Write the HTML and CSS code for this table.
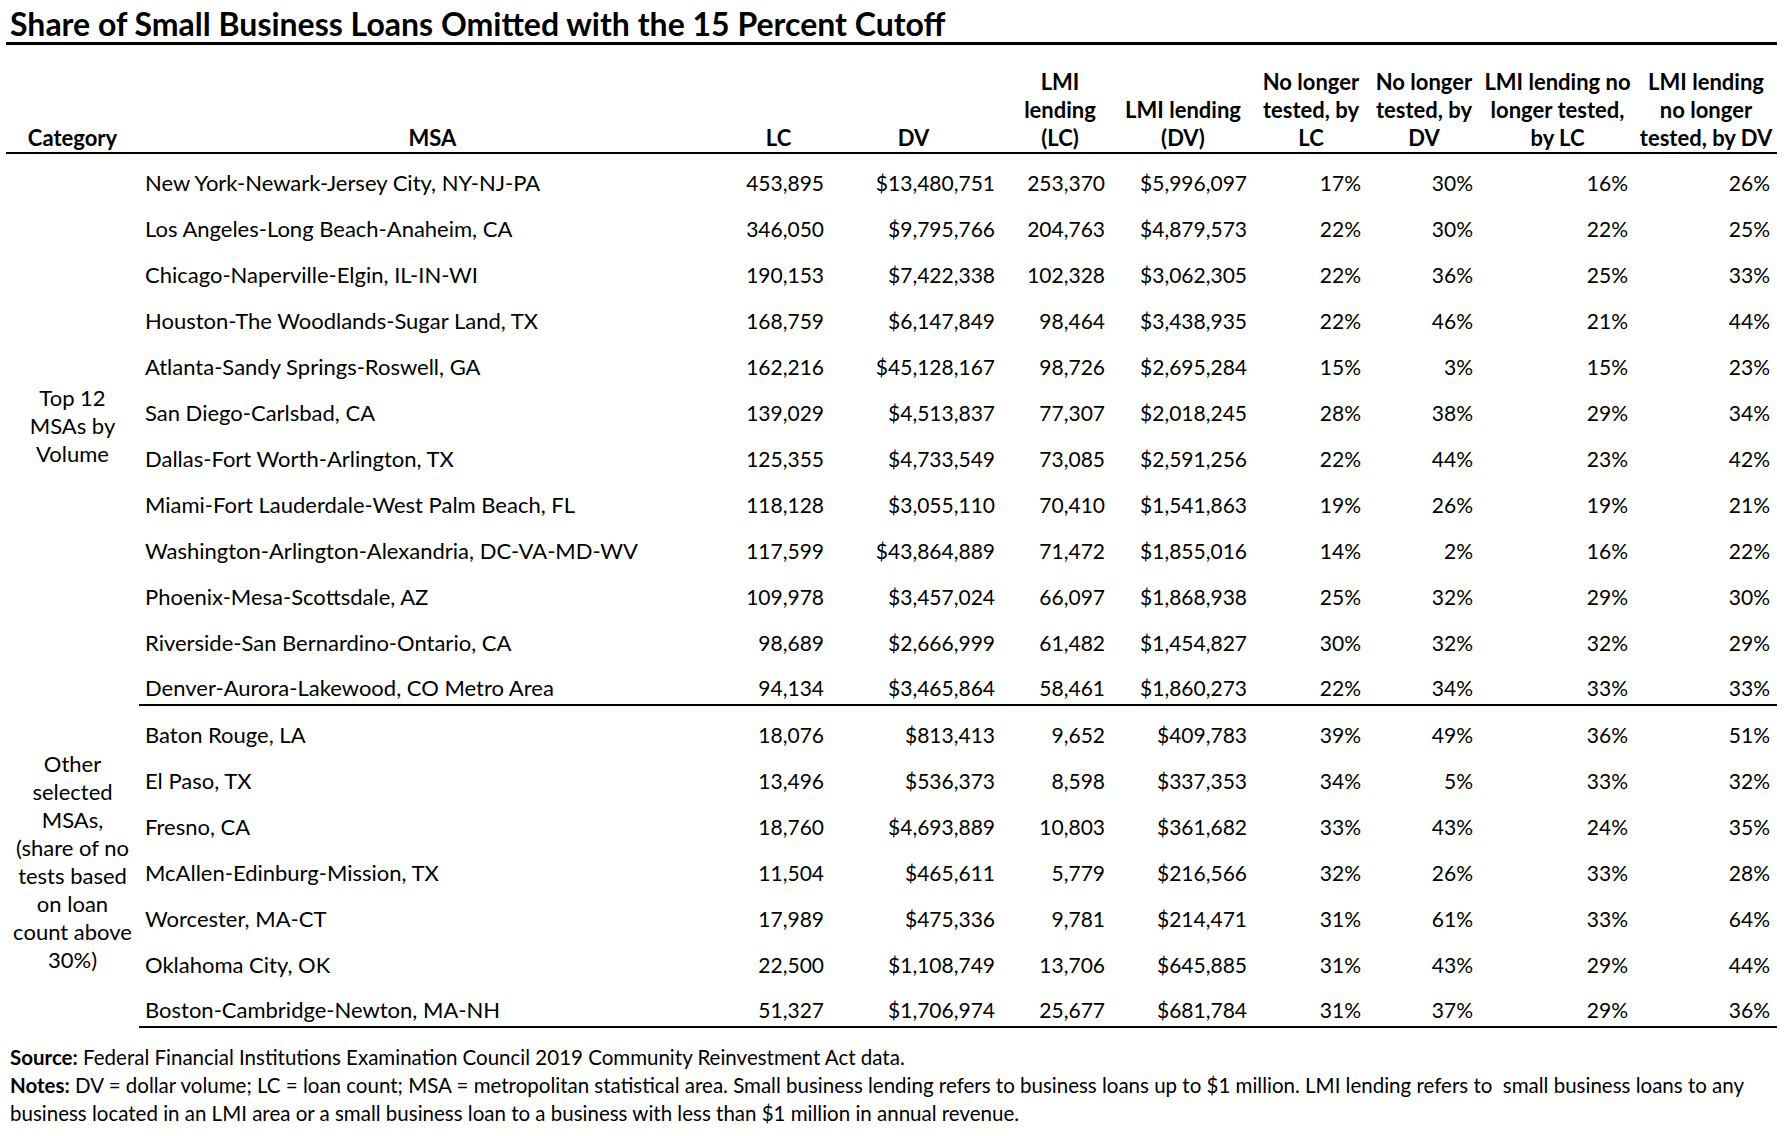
FILE: index.html
```html
<!DOCTYPE html>
<html>
<head>
  <link rel="stylesheet" href="styles.css">
</head>
<body>
  <div class="page">
    <h1 class="title">Share of Small Business Loans Omitted with the 15 Percent Cutoff</h1>

    <table class="loans">
      <colgroup>
        <col class="w-cat">
        <col class="w-msa">
        <col class="w-lc">
        <col class="w-dv">
        <col class="w-lmilc">
        <col class="w-lmidv">
        <col class="w-nllc">
        <col class="w-nldv">
        <col class="w-lmnlc">
        <col class="w-lmndv">
      </colgroup>
      <thead>
        <tr>
          <th>Category</th>
          <th>MSA</th>
          <th>LC</th>
          <th class="h-dv">DV</th>
          <th class="h-lmilc">LMI<br>lending<br>(LC)</th>
          <th>LMI lending<br>(DV)</th>
          <th>No longer<br>tested, by<br>LC</th>
          <th>No longer<br>tested, by<br>DV</th>
          <th>LMI lending no<br>longer tested,<br>by LC</th>
          <th>LMI lending<br>no longer<br>tested, by DV</th>
        </tr>
      </thead>
      <tbody>
        <tr>
          <td class="cat" rowspan="12">Top 12<br>MSAs by<br>Volume</td>
          <td class="msa">New York-Newark-Jersey City, NY-NJ-PA</td>
          <td>453,895</td><td>$13,480,751</td><td>253,370</td><td>$5,996,097</td><td>17%</td><td>30%</td><td>16%</td><td>26%</td>
        </tr>
        <tr>
          <td class="msa">Los Angeles-Long Beach-Anaheim, CA</td>
          <td>346,050</td><td>$9,795,766</td><td>204,763</td><td>$4,879,573</td><td>22%</td><td>30%</td><td>22%</td><td>25%</td>
        </tr>
        <tr>
          <td class="msa">Chicago-Naperville-Elgin, IL-IN-WI</td>
          <td>190,153</td><td>$7,422,338</td><td>102,328</td><td>$3,062,305</td><td>22%</td><td>36%</td><td>25%</td><td>33%</td>
        </tr>
        <tr>
          <td class="msa">Houston-The Woodlands-Sugar Land, TX</td>
          <td>168,759</td><td>$6,147,849</td><td>98,464</td><td>$3,438,935</td><td>22%</td><td>46%</td><td>21%</td><td>44%</td>
        </tr>
        <tr>
          <td class="msa">Atlanta-Sandy Springs-Roswell, GA</td>
          <td>162,216</td><td>$45,128,167</td><td>98,726</td><td>$2,695,284</td><td>15%</td><td>3%</td><td>15%</td><td>23%</td>
        </tr>
        <tr>
          <td class="msa">San Diego-Carlsbad, CA</td>
          <td>139,029</td><td>$4,513,837</td><td>77,307</td><td>$2,018,245</td><td>28%</td><td>38%</td><td>29%</td><td>34%</td>
        </tr>
        <tr>
          <td class="msa">Dallas-Fort Worth-Arlington, TX</td>
          <td>125,355</td><td>$4,733,549</td><td>73,085</td><td>$2,591,256</td><td>22%</td><td>44%</td><td>23%</td><td>42%</td>
        </tr>
        <tr>
          <td class="msa">Miami-Fort Lauderdale-West Palm Beach, FL</td>
          <td>118,128</td><td>$3,055,110</td><td>70,410</td><td>$1,541,863</td><td>19%</td><td>26%</td><td>19%</td><td>21%</td>
        </tr>
        <tr>
          <td class="msa">Washington-Arlington-Alexandria, DC-VA-MD-WV</td>
          <td>117,599</td><td>$43,864,889</td><td>71,472</td><td>$1,855,016</td><td>14%</td><td>2%</td><td>16%</td><td>22%</td>
        </tr>
        <tr>
          <td class="msa">Phoenix-Mesa-Scottsdale, AZ</td>
          <td>109,978</td><td>$3,457,024</td><td>66,097</td><td>$1,868,938</td><td>25%</td><td>32%</td><td>29%</td><td>30%</td>
        </tr>
        <tr>
          <td class="msa">Riverside-San Bernardino-Ontario, CA</td>
          <td>98,689</td><td>$2,666,999</td><td>61,482</td><td>$1,454,827</td><td>30%</td><td>32%</td><td>32%</td><td>29%</td>
        </tr>
        <tr class="group-end">
          <td class="msa">Denver-Aurora-Lakewood, CO Metro Area</td>
          <td>94,134</td><td>$3,465,864</td><td>58,461</td><td>$1,860,273</td><td>22%</td><td>34%</td><td>33%</td><td>33%</td>
        </tr>
        <tr>
          <td class="cat" rowspan="7">Other<br>selected<br>MSAs,<br>(share of no<br>tests based<br>on loan<br>count above<br>30%)</td>
          <td class="msa">Baton Rouge, LA</td>
          <td>18,076</td><td>$813,413</td><td>9,652</td><td>$409,783</td><td>39%</td><td>49%</td><td>36%</td><td>51%</td>
        </tr>
        <tr>
          <td class="msa">El Paso, TX</td>
          <td>13,496</td><td>$536,373</td><td>8,598</td><td>$337,353</td><td>34%</td><td>5%</td><td>33%</td><td>32%</td>
        </tr>
        <tr>
          <td class="msa">Fresno, CA</td>
          <td>18,760</td><td>$4,693,889</td><td>10,803</td><td>$361,682</td><td>33%</td><td>43%</td><td>24%</td><td>35%</td>
        </tr>
        <tr>
          <td class="msa">McAllen-Edinburg-Mission, TX</td>
          <td>11,504</td><td>$465,611</td><td>5,779</td><td>$216,566</td><td>32%</td><td>26%</td><td>33%</td><td>28%</td>
        </tr>
        <tr>
          <td class="msa">Worcester, MA-CT</td>
          <td>17,989</td><td>$475,336</td><td>9,781</td><td>$214,471</td><td>31%</td><td>61%</td><td>33%</td><td>64%</td>
        </tr>
        <tr>
          <td class="msa">Oklahoma City, OK</td>
          <td>22,500</td><td>$1,108,749</td><td>13,706</td><td>$645,885</td><td>31%</td><td>43%</td><td>29%</td><td>44%</td>
        </tr>
        <tr class="group-end">
          <td class="msa">Boston-Cambridge-Newton, MA-NH</td>
          <td>51,327</td><td>$1,706,974</td><td>25,677</td><td>$681,784</td><td>31%</td><td>37%</td><td>29%</td><td>36%</td>
        </tr>
      </tbody>
    </table>

    <div class="notes">
      <p><b>Source:</b> Federal Financial Institutions Examination Council 2019 Community Reinvestment Act data.</p>
      <p><b>Notes:</b> DV = dollar volume; LC = loan count; MSA = metropolitan statistical area. Small business lending refers to business loans up to $1 million. LMI lending refers to&nbsp; small business loans to any<br>business located in an LMI area or a small business loan to a business with less than $1 million in annual revenue.</p>
    </div>
  </div>
</body>
</html>
```

FILE: styles.css
```css
body {
  margin: 0;
  background: #fff;
  color: #000;
  font-family: Lato, "Open Sans", sans-serif;
}

.page {
  padding: 0 7px 0 6px;
}

.title {
  margin: 0;
  padding: 5px 0 0 4px;
  font-size: 32px;
  font-weight: 700;
  line-height: 37px;
  border-bottom: 3px solid #000;
}

/* table */

.loans {
  width: 1771px;
  table-layout: fixed;
  border-collapse: collapse;
}

.w-cat { width: 133px; }
.w-msa { width: 587px; }
.w-lc { width: 105px; }
.w-dv { width: 171px; }
.w-lmilc { width: 110px; }
.w-lmidv { width: 142px; }
.w-nllc { width: 114px; }
.w-nldv { width: 112px; }
.w-lmnlc { width: 155px; }
.w-lmndv { width: 142px; }

.loans th {
  padding: 23px 0 0;
  font-size: 22px;
  font-weight: 700;
  line-height: 28px;
  text-align: center;
  vertical-align: bottom;
  white-space: nowrap;
  border-bottom: 2px solid #000;
}

.loans th.h-dv {
  padding-right: 6px;
}

.loans th.h-lmilc {
  padding-left: 6px;
}

.loans tbody tr {
  height: 46px;
}

.loans td {
  padding: 0 7px 2px 0;
  font-size: 21px;
  line-height: 28px;
  text-align: right;
  vertical-align: bottom;
  white-space: nowrap;
}

.loans td.msa {
  padding-left: 6px;
  font-size: 22px;
  text-align: left;
}

.loans td.cat {
  padding: 0 0 8px;
  font-size: 22px;
  text-align: center;
  vertical-align: middle;
}

.loans tr.group-end td {
  border-bottom: 2px solid #000;
}

/* footnotes */

.notes {
  padding: 15px 0 0 4px;
  font-size: 20.5px;
  line-height: 28px;
}

.notes p {
  margin: 0;
}
```
